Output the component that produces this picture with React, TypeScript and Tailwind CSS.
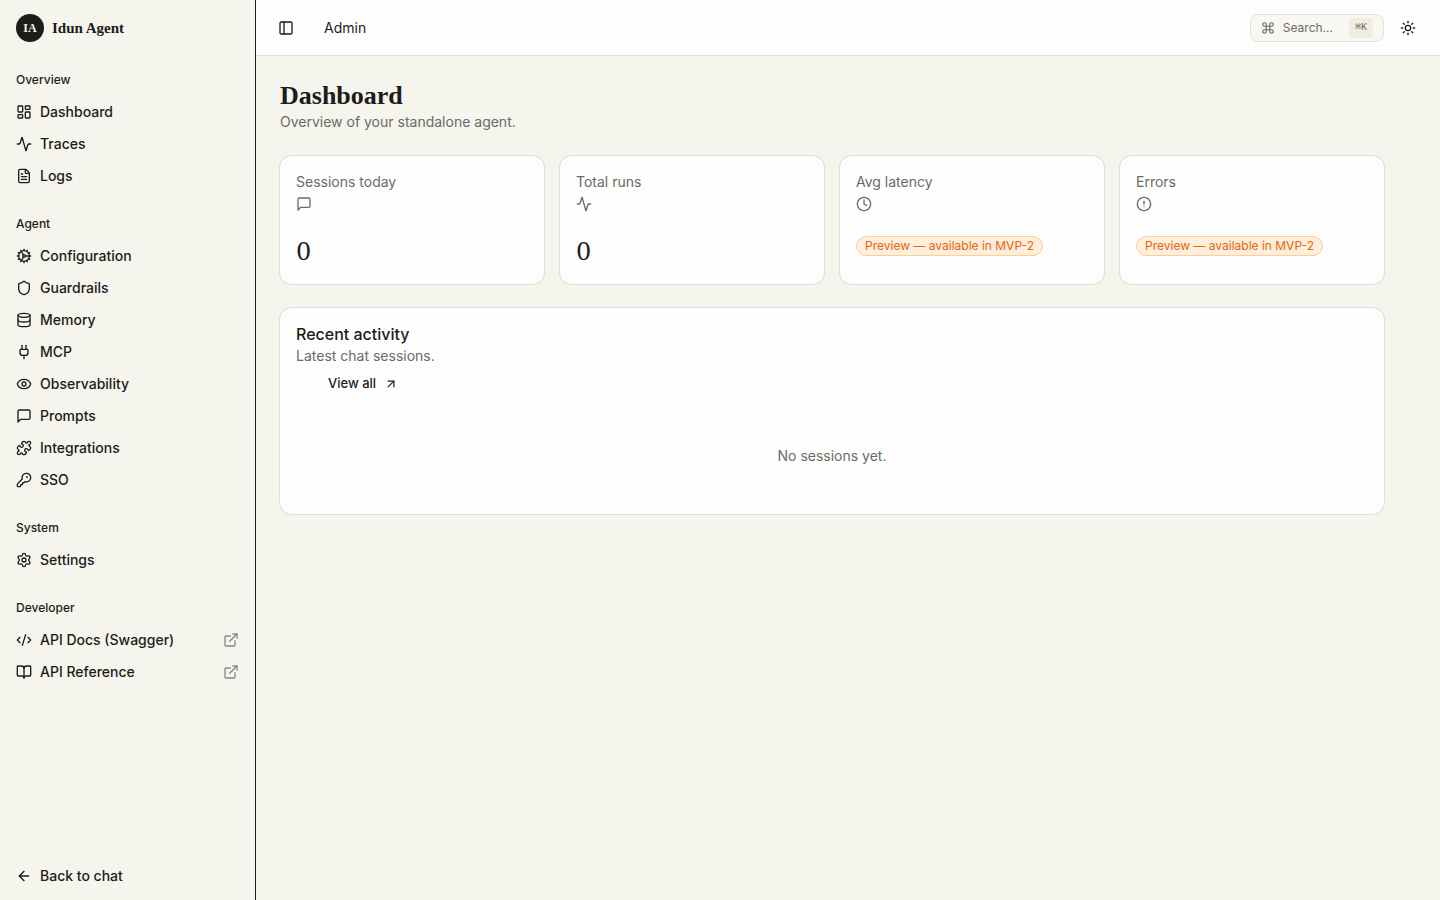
import {
  Activity,
  ArrowLeft,
  ArrowUpRight,
  BookOpen,
  CircleAlert,
  Clock,
  CodeXml,
  Cog,
  Command,
  Database,
  ExternalLink,
  Eye,
  FileText,
  KeyRound,
  LayoutDashboard,
  PanelLeft,
  Plug,
  Puzzle,
  Settings,
  Shield,
  Sun,
} from 'lucide-react'
import type { ComponentType } from 'react'

type IconType = ComponentType<{ className?: string }>
type NavItem = { label: string; icon: IconType; external?: boolean }

function ChatIcon({ className }: { className?: string }) {
  return (
    <svg
      className={className}
      viewBox="0 0 24 24"
      fill="none"
      stroke="currentColor"
      strokeWidth={2}
      strokeLinecap="round"
      strokeLinejoin="round"
      aria-hidden="true"
    >
      <path d="M21 15a2 2 0 0 1-2 2H7l-4 4V5a2 2 0 0 1 2-2h14a2 2 0 0 1 2 2z" />
    </svg>
  )
}

const navGroups: { title: string; items: NavItem[] }[] = [
  {
    title: 'Overview',
    items: [
      { label: 'Dashboard', icon: LayoutDashboard },
      { label: 'Traces', icon: Activity },
      { label: 'Logs', icon: FileText },
    ],
  },
  {
    title: 'Agent',
    items: [
      { label: 'Configuration', icon: Cog },
      { label: 'Guardrails', icon: Shield },
      { label: 'Memory', icon: Database },
      { label: 'MCP', icon: Plug },
      { label: 'Observability', icon: Eye },
      { label: 'Prompts', icon: ChatIcon },
      { label: 'Integrations', icon: Puzzle },
      { label: 'SSO', icon: KeyRound },
    ],
  },
  {
    title: 'System',
    items: [{ label: 'Settings', icon: Settings }],
  },
  {
    title: 'Developer',
    items: [
      { label: 'API Docs (Swagger)', icon: CodeXml, external: true },
      { label: 'API Reference', icon: BookOpen, external: true },
    ],
  },
]

const stats: { label: string; icon: IconType; value?: number }[] = [
  { label: 'Sessions today', icon: ChatIcon, value: 0 },
  { label: 'Total runs', icon: Activity, value: 0 },
  { label: 'Avg latency', icon: Clock },
  { label: 'Errors', icon: CircleAlert },
]

function NavLink({ label, icon: Icon, external }: NavItem) {
  return (
    <a
      href="#"
      className="flex h-8 items-center gap-2 rounded-md px-2 text-sm font-medium hover:bg-black/5"
    >
      <Icon className="size-4 shrink-0" />
      <span className="flex-1 truncate">{label}</span>
      {external && <ExternalLink className="size-4 shrink-0 opacity-50" />}
    </a>
  )
}

function Sidebar() {
  return (
    <aside className="sticky top-0 flex h-svh w-64 shrink-0 flex-col border-r border-[#1c1c19]">
      <div className="flex h-14 items-center gap-2 px-4 font-['Liberation_Serif',serif] font-bold">
        <div className="flex size-7 items-center justify-center rounded-full bg-[#1c1c19] text-xs text-[#f5f4ed]">
          IA
        </div>
        <span className="text-[15px]">Idun Agent</span>
      </div>

      <nav className="flex-1 overflow-y-auto">
        {navGroups.map((group) => (
          <div key={group.title} className="p-2">
            <h2 className="flex h-8 items-center px-2 text-xs font-medium">{group.title}</h2>
            {group.items.map((item) => (
              <NavLink key={item.label} {...item} />
            ))}
          </div>
        ))}
      </nav>

      <div className="p-2">
        <NavLink label="Back to chat" icon={ArrowLeft} />
      </div>
    </aside>
  )
}

function Header() {
  return (
    <header className="flex h-14 items-center gap-2 border-b border-[#e1e1d8] bg-[#fdfdfd] px-4">
      <button
        type="button"
        aria-label="Toggle sidebar"
        className="flex size-7 items-center justify-center rounded-md"
      >
        <PanelLeft className="size-4" />
      </button>
      <span className="ml-4 flex-1 text-sm">Admin</span>
      <button
        type="button"
        className="flex h-7 items-center gap-2 rounded-lg border border-[#e5e3d3] bg-[#f8f7f2] px-2.5 text-xs text-[#6b6b66]"
      >
        <Command className="size-3.5" />
        <span>Search…</span>
        <kbd className="ml-2 flex h-5 w-6 items-center justify-center rounded bg-[#f0eee0] font-['Liberation_Mono',monospace] text-[10px]">
          ⌘K
        </kbd>
      </button>
      <button
        type="button"
        aria-label="Toggle theme"
        className="flex size-8 items-center justify-center rounded-md"
      >
        <Sun className="size-4" />
      </button>
    </header>
  )
}

export default function App() {
  return (
    <div className="flex min-h-svh bg-[#f5f4ed] font-['Inter',sans-serif] text-[#1c1c19]">
      <Sidebar />

      <div className="flex min-w-0 flex-1 flex-col">
        <Header />

        <main className="flex max-w-6xl flex-col gap-6 p-6">
          <div>
            <h1 className="font-['Liberation_Serif',serif] text-[26px] leading-8 font-bold">
              Dashboard
            </h1>
            <p className="text-sm text-[#6b6b66]">Overview of your standalone agent.</p>
          </div>

          <div className="grid grid-cols-4 gap-4">
            {stats.map(({ label, icon: Icon, value }) => (
              <div
                key={label}
                className="flex flex-col rounded-xl bg-[#fdfdfd] p-4 ring-1 ring-[#deded9]"
              >
                <h3 className="text-sm text-[#6b6b66]">{label}</h3>
                <Icon className="mt-1 size-4 text-[#6b6b66]" />
                <div className="mt-6 flex">
                  {value !== undefined ? (
                    <p className="font-['DejaVu_Serif',serif] text-2xl leading-8">{value}</p>
                  ) : (
                    <span className="flex h-5 items-center rounded-full border border-[#f9cf9b] bg-[#ffeedb] px-2 text-xs text-[#e0690f]">
                      Preview — available in MVP-2
                    </span>
                  )}
                </div>
              </div>
            ))}
          </div>

          <section className="rounded-xl bg-[#fdfdfd] p-4 ring-1 ring-[#deded9]">
            <h2 className="text-base leading-5 font-medium">Recent activity</h2>
            <p className="mt-0.5 text-sm text-[#6b6b66]">Latest chat sessions.</p>
            <a
              href="#"
              className="mt-1 ml-6 inline-flex h-7 items-center gap-2 rounded-md px-2 text-[13px] font-medium"
            >
              View all
              <ArrowUpRight className="size-3.5" />
            </a>
            <p className="mt-4 p-8 text-center text-sm text-[#6b6b66]">No sessions yet.</p>
          </section>
        </main>
      </div>
    </div>
  )
}
